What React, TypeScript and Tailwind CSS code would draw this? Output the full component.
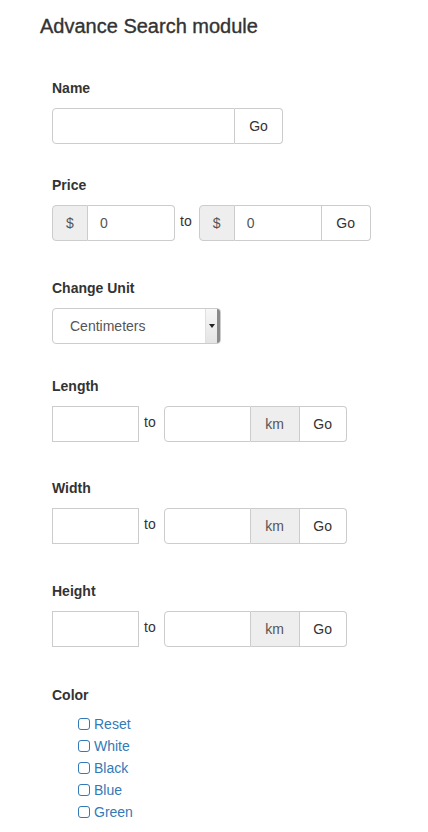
const font = { fontFamily: '"Liberation Sans", Arial, sans-serif' };

function Label({ children }: { children: React.ReactNode }) {
  return <div className="text-[14px] font-bold leading-[20px] text-[#333] mb-[10px]">{children}</div>;
}

function Addon({ children, className = "" }: { children: React.ReactNode; className?: string }) {
  return (
    <div className={`h-[36px] flex items-center justify-center bg-[#eee] border border-[#ccc] text-[14px] text-[#555] ${className}`}>
      {children}
    </div>
  );
}

function GoButton({ className = "" }: { className?: string }) {
  return (
    <button className={`h-[36px] flex items-center justify-center bg-white border border-[#ccc] rounded-r-[4px] text-[14px] text-[#333] ${className}`}>
      Go
    </button>
  );
}

function Field({ value = "", className = "" }: { value?: string; className?: string }) {
  return (
    <div className={`h-[36px] flex items-center bg-white border border-[#ccc] text-[14px] text-[#555] px-[12px] ${className}`}>
      {value}
    </div>
  );
}

function To({ className = "" }: { className?: string }) {
  return <span className={`text-[14px] text-[#333] -mt-[3px] ${className}`}>to</span>;
}

function RangeRow() {
  return (
    <div className="flex items-center">
      <Field className="w-[87px]" />
      <To className="ml-[5px] mr-[8px]" />
      <div className="flex">
        <Field className="w-[87px] rounded-l-[4px]" />
        <Addon className="w-[49px] border-l-0">km</Addon>
        <GoButton className="w-[47px] border-l-0" />
      </div>
    </div>
  );
}

const colors = ["Reset", "White", "Black", "Blue", "Green"];

export default function App() {
  return (
    <div className="min-h-[832px] bg-white" style={font}>
      <h3 className="pt-[15px] pl-[40px] text-[20px] leading-[22px] text-[#333] [-webkit-text-stroke:0.35px_#333]">
        Advance Search module
      </h3>

      <div className="pl-[52px] mt-[41px]">
        {/* Name */}
        <div>
          <Label>Name</Label>
          <div className="flex">
            <Field className="w-[183px] rounded-l-[4px]" />
            <GoButton className="w-[48px] border-l-0" />
          </div>
        </div>

        {/* Price */}
        <div className="mt-[31px]">
          <Label>Price</Label>
          <div className="flex items-center">
            <div className="flex">
              <Addon className="w-[36px] rounded-l-[4px]">$</Addon>
              <Field value="0" className="w-[87px] border-l-0 rounded-r-[4px]" />
            </div>
            <To className="ml-[5px] mr-[7px]" />
            <div className="flex">
              <Addon className="w-[36px] rounded-l-[4px]">$</Addon>
              <Field value="0" className="w-[87px] border-l-0" />
              <GoButton className="w-[49px] border-l-0" />
            </div>
          </div>
        </div>

        {/* Change Unit */}
        <div className="mt-[37px]">
          <Label>Change Unit</Label>
          <div className="w-[169px] h-[36px] flex border border-[#ccc] rounded-[4px] bg-white overflow-hidden">
            <div className="flex-1 flex items-center pl-[17px] text-[14px] text-[#555]">Centimeters</div>
            <div className="w-[15px] h-full flex items-center justify-center bg-gradient-to-b from-[#f7f7f7] to-[#e4e4e4] border-l border-[#e0e0e0] border-r-[3px] border-r-[#8a8a8a]">
              <svg width="6" height="4" viewBox="0 0 6 4">
                <path d="M0 0h6L3 4z" fill="#222" />
              </svg>
            </div>
          </div>
        </div>

        {/* Length */}
        <div className="mt-[32px]">
          <Label>Length</Label>
          <RangeRow />
        </div>

        {/* Width */}
        <div className="mt-[36px]">
          <Label>Width</Label>
          <RangeRow />
        </div>

        {/* Height */}
        <div className="mt-[37px]">
          <Label>Height</Label>
          <RangeRow />
        </div>

        {/* Color */}
        <div className="mt-[38px]">
          <div className="text-[14px] font-bold leading-[20px] text-[#333]">Color</div>
          <ul className="mt-[8px] pl-[26px]">
            {colors.map((c) => (
              <li key={c} className="flex items-center h-[22px] text-[14px] text-[#337ab7]">
                <span className="w-[12px] h-[12px] border-[1.5px] border-[#337ab7] rounded-[3px] mr-[4px]" />
                {c}
              </li>
            ))}
          </ul>
        </div>
      </div>
    </div>
  );
}
